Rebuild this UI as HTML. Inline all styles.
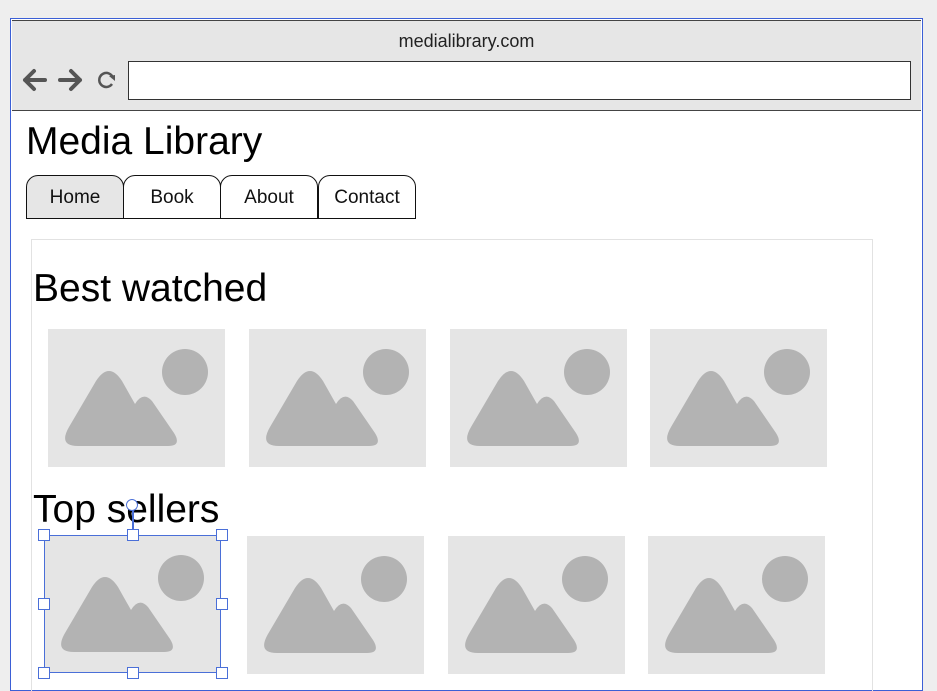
<!DOCTYPE html>
<html><head><meta charset="utf-8"><style>
html,body{margin:0;width:937px;height:691px;overflow:hidden}
body{background:#eeeeee;position:relative;font-family:"Liberation Sans",Arial,sans-serif}
.a{position:absolute}
.win{left:10px;top:18px;width:911px;height:671px;border:1px solid #3b5fd6;border-bottom:2px solid #3b5fd6;background:#fff}
.bar{left:12px;top:20px;width:909px;height:89px;background:#e6e6e6;border-bottom:1.5px solid #444;border-top:1px solid #444}
.url{left:128px;top:61px;width:783px;height:39px;border:1.5px solid #333;background:#fff;box-sizing:border-box}
.tab{position:absolute;top:175px;height:44px;width:98px;border:1.5px solid #111;border-radius:12px 12px 0 0;box-sizing:border-box;background:#fff;font-size:19px;text-align:center;line-height:44px;color:#111}
.img{position:absolute;width:177px;height:138px;background:#e5e5e5}
.img svg{position:absolute;left:0;top:0}
.h{font-size:39px;color:#000}
.hd{position:absolute;width:12px;height:12px;border:1.5px solid #4a6fd8;background:#fff;box-sizing:border-box}
</style></head><body>
<div class="a win"></div>
<div class="a bar"></div>
<div class="a" style="left:12px;top:31px;width:909px;text-align:center;font-size:18px;color:#222">medialibrary.com</div>
<svg class="a" style="left:20px;top:66px" width="100" height="28" viewBox="0 0 100 28">
<path d="M5 14 H25 M14 5 L5 14 L14 23" stroke="#555" stroke-width="4" fill="none" stroke-linecap="round" stroke-linejoin="round"/>
<path d="M40 14 H60 M51 5 L60 14 L51 23" stroke="#555" stroke-width="4" fill="none" stroke-linecap="round" stroke-linejoin="round"/>
<path d="M93 12 A7 7 0 1 0 92 18" stroke="#555" stroke-width="2.5" fill="none"/>
<path d="M89 10 L95 9 L95 15 Z" fill="#555"/>
</svg>
<div class="a url"></div>
<div class="a" style="left:26px;top:120px;font-size:39px;color:#000">Media Library</div>
<div class="tab" style="left:26px;background:#e6e6e6">Home</div>
<div class="tab" style="left:123px">Book</div>
<div class="tab" style="left:220px">About</div>
<div class="tab" style="left:318px">Contact</div>
<div class="a" style="left:31px;top:239px;width:840px;height:460px;border:1px solid #e2e2e2"></div>
<div class="a h" style="left:33px;top:267px">Best watched</div>
<div class="a h" style="left:33px;top:488px">Top sellers</div>

<svg width="0" height="0" style="position:absolute"><defs><g id="ic">
<circle cx="137" cy="43" r="23" fill="#b3b3b3"/>
<path d="M30 117 Q10 117 21 98 L48 52 Q61 32 74 52 L87 75 Q95 62 104 72 L126 104 Q134 117 120 117 Z" fill="#b3b3b3"/>
</g></defs></svg>

<div class="img" style="left:48px;top:329px"><svg width="177" height="138"><use href="#ic"/></svg></div>
<div class="img" style="left:249px;top:329px"><svg width="177" height="138"><use href="#ic"/></svg></div>
<div class="img" style="left:450px;top:329px"><svg width="177" height="138"><use href="#ic"/></svg></div>
<div class="img" style="left:650px;top:329px"><svg width="177" height="138"><use href="#ic"/></svg></div>

<div class="img" style="left:44px;top:535px"><svg width="177" height="138"><use href="#ic"/></svg></div>
<div class="img" style="left:247px;top:536px"><svg width="177" height="138"><use href="#ic"/></svg></div>
<div class="img" style="left:448px;top:536px"><svg width="177" height="138"><use href="#ic"/></svg></div>
<div class="img" style="left:648px;top:536px"><svg width="177" height="138"><use href="#ic"/></svg></div>

<div class="a" style="left:44px;top:535px;width:177px;height:138px;border:1.5px solid #4a6fd8;box-sizing:border-box"></div>
<div class="a" style="left:132px;top:507px;width:1.5px;height:28px;background:#4a6fd8"></div>
<div class="a" style="left:126px;top:499px;width:12px;height:12px;border:1.5px solid #4a6fd8;border-radius:50%;background:#fff;box-sizing:border-box"></div>
<div class="hd" style="left:38px;top:529px"></div>
<div class="hd" style="left:127px;top:529px"></div>
<div class="hd" style="left:216px;top:529px"></div>
<div class="hd" style="left:38px;top:598px"></div>
<div class="hd" style="left:216px;top:598px"></div>
<div class="hd" style="left:38px;top:667px"></div>
<div class="hd" style="left:127px;top:667px"></div>
<div class="hd" style="left:216px;top:667px"></div>
</body></html>
